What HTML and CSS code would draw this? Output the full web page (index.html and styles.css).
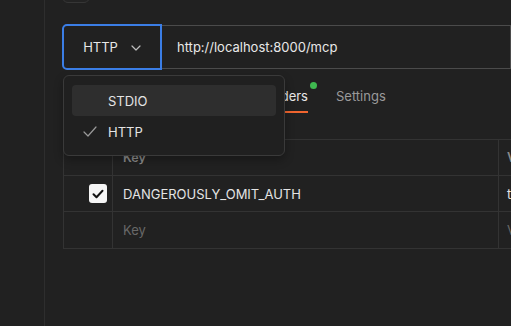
FILE: index.html
```html
<!DOCTYPE html>
<html lang="en">
<head>
<meta charset="UTF-8">
<title>MCP Inspector</title>
<link rel="stylesheet" href="styles.css">
</head>
<body>
<div class="sidebar"></div>
<div class="main">
    <div class="stub"></div>

    <div class="connect">
        <div class="transport">HTTP
            <svg class="chevron" width="10" height="6" viewBox="0 0 10 6"><path d="M1 1l4 4 4-4" fill="none" stroke="#bdbdbd" stroke-width="1.2" stroke-linecap="round" stroke-linejoin="round"/></svg>
        </div>
        <div class="url">http://localhost:8000/mcp</div>
    </div>

    <div class="tabs">
        <div class="tab active">Headers<span class="dot"></span></div>
        <div class="tab">Settings</div>
    </div>

    <div class="table">
        <div class="row head">
            <div class="cell check"></div>
            <div class="cell key">Key</div>
            <div class="cell val">Value</div>
        </div>
        <div class="row">
            <div class="cell check"><span class="box"><svg width="12" height="10" viewBox="0 0 12 10"><path d="M1.5 5.2l3 3 6-6.4" fill="none" stroke="#111" stroke-width="2" stroke-linecap="round" stroke-linejoin="round"/></svg></span></div>
            <div class="cell key">DANGEROUSLY_OMIT_AUTH</div>
            <div class="cell val">true</div>
        </div>
        <div class="row">
            <div class="cell check"></div>
            <div class="cell key empty">Key</div>
            <div class="cell val empty">Value</div>
        </div>
    </div>

    <div class="menu">
        <div class="item hover">STDIO</div>
        <div class="item">
            <svg class="tick" width="14" height="11" viewBox="0 0 14 11"><path d="M1 6l4 4 8-9" fill="none" stroke="#9a9a9a" stroke-width="1.2" stroke-linecap="round" stroke-linejoin="round"/></svg>
            HTTP</div>
    </div>
</div>
</body>
</html>
```

FILE: styles.css
```css
body, html {
    margin:0; padding:0; height:100%;
    background:#212121; color:#e4e4e4;
    font-family:'Inter','Noto Sans',sans-serif; font-size:13px;
    overflow:hidden;
}
body { display:flex; }
.sidebar {
    width:44px; flex:none; border-right:1px solid #2e2e2e;
}
.main {
    flex:1; position:relative; padding-left:17px; min-width:0;
}
.stub {
    width:26px; height:20px; margin-top:-19px;
    border:1px solid #363636; border-radius:6px; background:#232323;
}
.connect {
    display:flex; align-items:center; margin-top:21px;
}
.transport {
    width:96px; height:42px; flex:none; box-sizing:content-box;
    border:2px solid #3b7ee6; border-radius:5px 0 0 5px;
    display:flex; align-items:center; justify-content:center; gap:11px;
    color:#e8e8e8;
}
.chevron { margin-top:1px; margin-left:2px; }
.url {
    flex:1; height:42px; line-height:42px;
    border:1px solid #4b4b4b; border-left:none;
    padding-left:15px; white-space:nowrap; color:#e8e8e8;
}
.tabs {
    display:flex; gap:28px; padding-left:194px; margin-top:11px; height:32px;
}
.tab {
    position:relative; color:#9a9a9a; line-height:22px; padding-top:4px;
}
.tab.active {
    color:#e8e8e8; height:26px; border-bottom:2px solid #f0652f;
}
.dot {
    position:absolute; right:-9px; top:1px;
    width:7px; height:7px; border-radius:50%; background:#3fb950;
}
.table {
    margin-top:26px; margin-left:1px;
    border-top:1px solid #333; border-left:1px solid #333;
}
.row {
    display:flex; height:35px; border-bottom:1px solid #333;
}
.row:last-child { height:36px; }
.cell {
    display:flex; align-items:center; white-space:nowrap; overflow:hidden;
}
.check {
    width:43px; flex:none; justify-content:flex-end; padding-right:5px;
    border-right:1px solid #333;
}
.key {
    width:375px; flex:none; padding-left:10px;
    border-right:1px solid #333;
}
.val { padding-left:8px; }
.head .cell { color:#8a8a8a; font-weight:600; font-size:12.5px; }
.empty { color:#686868; }
.box {
    width:18px; height:19px; border-radius:3px; background:#f5f5f5;
    display:flex; align-items:center; justify-content:center;
}
.menu {
    position:absolute; left:18px; top:75px; width:204px;
    padding:9px 8px 8px; background:#202020;
    border:1px solid #3a3a3a; border-radius:6px;
    box-shadow:0 4px 10px rgba(0,0,0,0.3);
}
.item {
    height:31px; display:flex; align-items:center; padding-left:36px;
    border-radius:4px; position:relative; color:#e4e4e4;
}
.item.hover { background:#2e2e2e; }
.tick { position:absolute; left:11px; top:10px; }
```
